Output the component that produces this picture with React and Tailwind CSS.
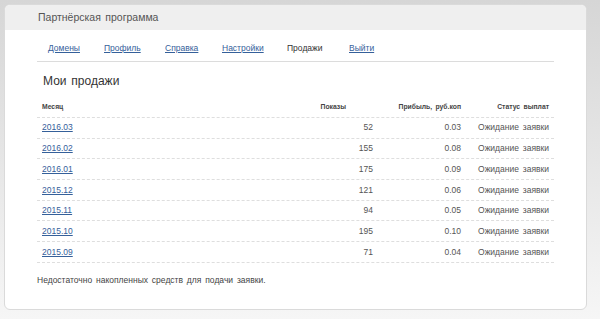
import React from "react";

const rows = [
  ["2016.03", "52", "0.03"],
  ["2016.02", "155", "0.08"],
  ["2016.01", "175", "0.09"],
  ["2015.12", "121", "0.06"],
  ["2015.11", "94", "0.05"],
  ["2015.10", "195", "0.10"],
  ["2015.09", "71", "0.04"],
];

const nav = [
  ["Домены", "w-[56px]", true],
  ["Профиль", "w-[61px]", true],
  ["Справка", "w-[57px]", true],
  ["Настройки", "w-[65px]", true],
  ["Продажи", "w-[62px]", false],
  ["Выйти", "w-[50px]", true],
];

export default function App() {
  return (
    <div className="w-[600px] h-[319px] bg-gradient-to-b from-[#d6d6d6] to-[#f6f6f6] pt-[4px] pl-[4px] font-['Liberation_Sans',Arial,sans-serif] [word-spacing:1.5px]">
      <div className="w-[583px] h-[306px] rounded-[6px] border border-[#dadada] bg-white overflow-hidden">
        <div className="h-[25px] bg-[#efefef] flex items-center pl-[33px] text-[10.5px] text-[#555]">
          Партнёрская программа
        </div>
        <div className="ml-[32px] w-[517px]">
          <div className="h-[32px] border-b border-[#dcdcdc] flex items-center pl-[11px] pt-[5px] text-[8.5px]">
            {nav.map(([t, w, link]) => (
              <div key={t} className={w}>
                {link ? (
                  <a href="#" className="text-[#35609a] underline">{t}</a>
                ) : (
                  <span className="text-[#333]">{t}</span>
                )}
              </div>
            ))}
          </div>
          <div className="mt-[11px] h-[16px] leading-[16px] pl-[6px] text-[12px] text-[#333]">
            Мои продажи
          </div>
          <div className="mt-[9px] h-[20px] grid grid-cols-[256px_80px_88px_93px] items-center text-[6.8px] font-bold text-[#444] border-b border-dashed border-[#dedede]">
            <div className="pl-[5px]">Месяц</div>
            <div className="text-right pr-[27px]">Показы</div>
            <div className="text-right">Прибыль, руб.коп</div>
            <div className="text-right pr-[5px]">Статус выплат</div>
          </div>
          {rows.map(([m, v, p]) => (
            <div key={m} className="h-[20.7px] grid grid-cols-[256px_80px_88px_93px] items-center text-[8.5px] text-[#555] border-b border-dashed border-[#dedede]">
              <div className="pl-[5px]">
                <a href="#" className="text-[#35609a] underline">{m}</a>
              </div>
              <div className="text-right">{v}</div>
              <div className="text-right">{p}</div>
              <div className="text-right pr-[5px]">Ожидание заявки</div>
            </div>
          ))}
          <div className="mt-[11px] h-[12px] leading-[12px] text-[8.5px] text-[#444]">
            Недостаточно накопленных средств для подачи заявки.
          </div>
        </div>
      </div>
    </div>
  );
}
